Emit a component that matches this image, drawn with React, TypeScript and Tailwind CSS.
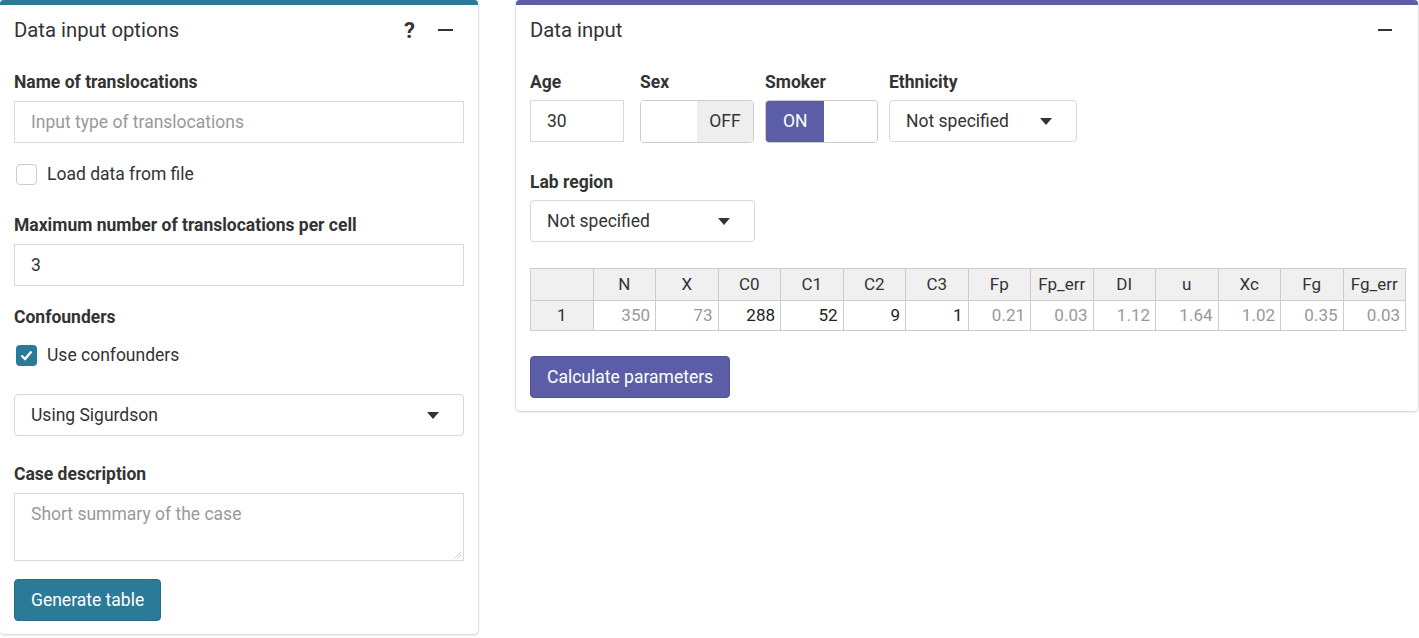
import React from "react";

const TEAL = "bg-[#2b7a98]";

const Caret = () => (
  <svg width="12" height="7" viewBox="0 0 12 7" className="shrink-0">
    <path d="M0 0h12L6 7z" fill="#333" />
  </svg>
);

const Select = ({ value, className }: { value: string; className: string }) => (
  <div
    className={`flex items-center justify-between h-[42px] px-4 border border-[#d8d8d8] rounded-[4px] bg-white text-[17.5px] text-[#333] ${className}`}
  >
    <span>{value}</span>
    <span className="mr-[8px]">
      <Caret />
    </span>
  </div>
);

const Label = ({ children, mb = "mb-[9px]" }: { children: React.ReactNode; mb?: string }) => (
  <div className={`text-[17.5px] font-bold text-[#333] leading-[20px] ${mb}`}>{children}</div>
);

const headers = ["", "N", "X", "C0", "C1", "C2", "C3", "Fp", "Fp_err", "DI", "u", "Xc", "Fg", "Fg_err"];
const row: { v: string; dark?: boolean }[] = [
  { v: "350" },
  { v: "73" },
  { v: "288", dark: true },
  { v: "52", dark: true },
  { v: "9", dark: true },
  { v: "1", dark: true },
  { v: "0.21" },
  { v: "0.03" },
  { v: "1.12" },
  { v: "1.64" },
  { v: "1.02" },
  { v: "0.35" },
  { v: "0.03" },
];

export default function App() {
  return (
    <div
      className="min-h-[638px] bg-white flex items-start gap-[38px] text-[#333]"
      style={{ fontFamily: "Roboto, 'Liberation Sans', sans-serif" }}
    >
      {/* left card */}
      <div className="w-[478px] shrink-0 border-t-[5px] border-[#2b7a98] rounded-t-[4px] rounded-b-[4px] bg-white shadow-[0_0_2px_rgba(0,0,0,0.25),0_1px_3px_rgba(0,0,0,0.12)]">
        <div className="flex items-center justify-between h-[50px] pl-[14px] pr-[25px]">
          <span className="text-[20.3px] text-[#333]">Data input options</span>
          <div className="flex items-center gap-[23px]">
            <span className="text-[22px] font-bold text-[#333]">?</span>
            <span className="block w-[15px] h-[2.5px] bg-[#333]" />
          </div>
        </div>
        <div className="px-[14px] pt-[17px] pb-[13px]">
          <Label>Name of translocations</Label>
          <div className="h-[42px] border border-[#d8d8e0] flex items-center px-4 text-[17.5px] text-[#999]">
            Input type of translocations
          </div>
          <div className="flex items-center mt-[21px] h-[21px]">
            <span className="w-[21px] h-[21px] ml-[2px] border border-[#ccc] rounded-[4px] bg-white" />
            <span className="ml-[10px] text-[17.5px]">Load data from file</span>
          </div>

          <div className="mt-[30px]">
            <Label>Maximum number of translocations per cell</Label>
          </div>
          <div className="h-[42px] border border-[#d8d8e0] flex items-center px-4 text-[17.5px]">3</div>

          <div className="mt-[21px]">
            <Label>Confounders</Label>
          </div>
          <div className="flex items-center h-[21px] mt-[18px]">
            <span className="w-[21px] h-[21px] ml-[2px] rounded-[4px] bg-[#2b7a98] flex items-center justify-center">
              <svg width="13" height="11" viewBox="0 0 13 11">
                <path d="M1.5 5.5l3.5 3.5 6.5-7.5" stroke="#fff" strokeWidth="2.4" fill="none" />
              </svg>
            </span>
            <span className="ml-[10px] text-[17.5px]">Use confounders</span>
          </div>

          <Select value="Using Sigurdson" className="mt-[28px] w-full" />

          <div className="mt-[28px]">
            <Label>Case description</Label>
          </div>
          <div className="relative h-[68px] border border-[#d8d8e0] px-4 pt-[7px] text-[17.5px] text-[#999]">
            Short summary of the case
            <svg width="6" height="6" viewBox="0 0 6 6" className="absolute right-[2px] bottom-[2px]">
              <path d="M0 6L6 0M3 6L6 3" stroke="#bbb" strokeWidth="0.8" />
            </svg>
          </div>

          <button className={`mt-[18px] h-[42px] px-4 rounded-[4px] ${TEAL} text-white text-[17.5px] border border-[#266c87]`}>
            Generate table
          </button>
        </div>
      </div>

      {/* right card */}
      <div className="w-[902px] shrink-0 border-t-[5px] border-[#5b5ea6] rounded-t-[4px] rounded-b-[4px] bg-white shadow-[0_0_2px_rgba(0,0,0,0.25),0_1px_3px_rgba(0,0,0,0.12)]">
        <div className="flex items-center justify-between h-[50px] pl-[14px] pr-[26px]">
          <span className="text-[20.3px] text-[#333]">Data input</span>
          <span className="block w-[14px] h-[2.5px] bg-[#333]" />
        </div>
        <div className="pl-[14px] pr-[13px] pt-[17px] pb-[13px]">
          <div className="flex items-start gap-[16px]">
            <div className="w-[94px]">
              <Label mb="mb-[8px]">Age</Label>
              <div className="h-[42px] border border-[#d8d8e0] flex items-center px-4 text-[17.5px]">30</div>
            </div>
            <div className="w-[114px]">
              <Label mb="mb-[8px]">Sex</Label>
              <div className="h-[43px] border border-[#ccc] rounded-[4px] flex overflow-hidden">
                <div className="w-1/2 bg-white" />
                <div className="w-1/2 bg-[#eee] flex items-center justify-center text-[17.5px] text-[#333]">OFF</div>
              </div>
            </div>
            <div className="w-[113px] ml-[-5px]">
              <Label mb="mb-[8px]">Smoker</Label>
              <div className="h-[43px] border border-[#ccc] rounded-[4px] flex overflow-hidden">
                <div className="w-[58px] bg-[#5b5ea6] flex items-center pl-[17px] text-[17.5px] text-white">ON</div>
                <div className="flex-1 bg-white" />
              </div>
            </div>
            <div className="w-[188px] ml-[-5px]">
              <Label mb="mb-[8px]">Ethnicity</Label>
              <Select value="Not specified" className="w-full" />
            </div>
          </div>

          <div className="mt-[29px]">
            <Label mb="mb-[8px]">Lab region</Label>
          </div>
          <Select value="Not specified" className="w-[225px]" />

          <table className="mt-[26px] border-collapse text-[17px] table-fixed w-[875px]">
            <thead>
              <tr className="h-[32px]">
                {headers.map((h, i) => (
                  <th
                    key={i}
                    className="border border-[#ccc] bg-[#f0f0f0] font-normal text-[#333] text-center w-[62.5px] p-0"
                  >
                    {h}
                  </th>
                ))}
              </tr>
            </thead>
            <tbody>
              <tr className="h-[30px]">
                <td className="border border-[#ccc] bg-[#f0f0f0] text-center text-[#333] p-0">1</td>
                {row.map((c, i) => (
                  <td
                    key={i}
                    className={`border border-[#ccc] text-right pr-[5px] p-0 ${c.dark ? "text-[#222]" : "text-[#999]"}`}
                  >
                    {c.v}
                  </td>
                ))}
              </tr>
            </tbody>
          </table>

          <button className="mt-[25px] h-[42px] px-4 rounded-[4px] bg-[#5b5ea6] text-white text-[17.5px] border border-[#4e5199]">
            Calculate parameters
          </button>
        </div>
      </div>
    </div>
  );
}
